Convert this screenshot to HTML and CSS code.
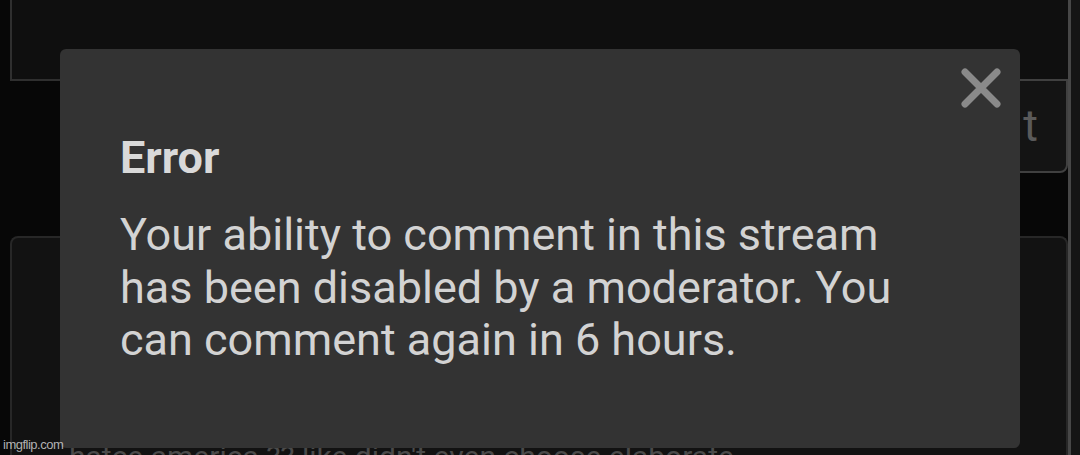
FILE: index.html
```html
<!DOCTYPE html>
<html lang="en">
<head>
    <meta charset="UTF-8">
    <title>Stream chat</title>
    <link rel="stylesheet" href="styles.css">
</head>
<body>
    <div class="screen">
        <div class="feed">
            <div class="top-card"></div>
            <div class="actions">
                <button class="post-btn">Post</button>
            </div>
            <div class="comment-card">
                <p class="comment-text">hatce america ?? like didn't even choose elaborate</p>
            </div>
        </div>
        <div class="rail"></div>
        <div class="edge"></div>
    </div>

    <!-- Error dialog -->
    <div class="dialog">
        <button class="dialog-close" aria-label="Close">
            <svg width="40" height="40" viewBox="0 0 40 40">
                <path d="M4 4 L36 36 M36 4 L4 36" stroke="#8a8a8a" stroke-width="7" stroke-linecap="round" fill="none"/>
            </svg>
        </button>
        <h2 class="dialog-title">Error</h2>
        <p class="dialog-text">Your ability to comment in this stream has been disabled by a moderator. You can comment again in 6 hours.</p>
    </div>

    <span class="watermark">imgflip.com</span>
</body>
</html>
```

FILE: styles.css
```css
body { margin: 0; background: #070707; font-family: Roboto, "Noto Sans", sans-serif; overflow: hidden; }
.screen {
    display: flex;
    height: 455px;
    overflow: hidden;
}
.feed {
    flex: 1;
    padding-left: 10px;
    display: flex;
    flex-direction: column;
}
.top-card {
    height: 79px;
    flex: none;
    background: #0f0f0f;
    border-left: 2px solid #2f2f2f;
    border-bottom: 2px solid #2f2f2f;
}
.actions {
    display: flex;
    justify-content: flex-end;
    margin-top: -2px;
}
.post-btn {
    width: 152px; height: 94px;
    background: #141414;
    border: 2px solid #404040;
    border-radius: 0 0 8px 8px;
    color: #5a5a5a;
    font-family: Roboto, sans-serif;
    font-size: 45px;
    line-height: 52px;
    letter-spacing: 8px;
    padding: 0 16px 0 0;
}
.comment-card {
    margin-top: 63px;
    flex: 1;
    background: #121212;
    border: 2px solid #272727;
    border-bottom: none;
    border-radius: 8px 8px 0 0;
    padding: 201px 0 0 57px;
}
.comment-text {
    margin: 0;
    font-size: 30px;
    line-height: 36px;
    color: #4a4a4a;
    white-space: nowrap;
}
.rail { width: 3px; background: #474747; }
.edge { width: 9px; background: #151515; }

/* Dialog over the chat */
.dialog {
    position: absolute;
    left: 60px; top: 49px;
    width: 960px; height: 399px;
    box-sizing: border-box;
    background: #333333;
    border-radius: 6px;
    padding: 83px 0 0 60px;
}
.dialog-close {
    position: absolute;
    top: 19px; right: 19px;
    width: 40px; height: 40px;
    padding: 0; border: none; background: none;
}
.dialog-close svg { display: block; }
.dialog-title {
    margin: 0;
    font-size: 45px;
    line-height: 52px;
    font-weight: bold;
    color: #d9d9d9;
}
.dialog-text {
    margin: 25px 0 0 0;
    max-width: 800px;
    font-size: 45px;
    line-height: 52.5px;
    color: #d3d3d3;
}
.watermark {
    position: absolute;
    left: 3px; top: 437px;
    font-family: "Liberation Sans", Arial, sans-serif;
    font-size: 13px;
    line-height: 16px;
    letter-spacing: -0.5px;
    color: rgba(220,220,220,0.8);
}
```
